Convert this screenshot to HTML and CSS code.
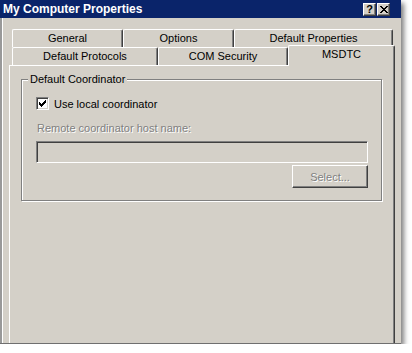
FILE: index.html
```html
<!DOCTYPE html>
<html>
    <head>
        <meta charset="UTF-8">
        <meta name="viewport" content="width=device-width, initial-scale=1.0">
        <link rel="stylesheet" href="styles.css">
    </head>

    <body>

        <div class="window">
            <div class="titlebar">
                <span class="title">My Computer Properties</span>
                <div class="caption-buttons">
                    <span class="cap-btn">?</span>
                    <span class="cap-btn">
                        <svg width="8" height="7" viewBox="0 0 8 7">
                            <rect x="0" y="0" width="2" height="1"/><rect x="6" y="0" width="2" height="1"/>
                            <rect x="1" y="1" width="2" height="1"/><rect x="5" y="1" width="2" height="1"/>
                            <rect x="2" y="2" width="4" height="1"/>
                            <rect x="3" y="3" width="2" height="1"/>
                            <rect x="2" y="4" width="4" height="1"/>
                            <rect x="1" y="5" width="2" height="1"/><rect x="5" y="5" width="2" height="1"/>
                            <rect x="0" y="6" width="2" height="1"/><rect x="6" y="6" width="2" height="1"/>
                        </svg>
                    </span>
                </div>
            </div>

            <div class="body">
                <div class="tabrow">
                    <div class="tab w-general">General</div>
                    <div class="tab w-options">Options</div>
                    <div class="tab w-defprops">Default Properties</div>
                </div>
                <div class="tabrow">
                    <div class="tab w-defprot">Default Protocols</div>
                    <div class="tab w-com">COM Security</div>
                    <div class="tab w-msdtc selected">MSDTC</div>
                </div>

                <div class="panel">
                    <div class="group">
                        <div class="legend">Default Coordinator</div>

                        <div class="check-row">
                            <span class="checkbox">
                                <svg width="7" height="7" viewBox="0 0 7 7">
                                    <rect x="0" y="2" width="1" height="3"/>
                                    <rect x="1" y="3" width="1" height="3"/>
                                    <rect x="2" y="4" width="1" height="3"/>
                                    <rect x="3" y="3" width="1" height="3"/>
                                    <rect x="4" y="2" width="1" height="3"/>
                                    <rect x="5" y="1" width="1" height="3"/>
                                    <rect x="6" y="0" width="1" height="3"/>
                                </svg>
                            </span>
                            <span>Use local coordinator</span>
                        </div>

                        <div class="field-label disabled">Remote coordinator host name:</div>
                        <div class="textbox"></div>
                        <div class="button disabled">Select...</div>
                    </div>
                </div>
            </div>
        </div>

    </body>
</html>
```

FILE: styles.css
```css
body {
    margin: 0;
    background: #fff;
    font-family: "Liberation Sans", Arial, sans-serif;
    font-size: 11px;
    color: #000;
}

.window {
    width: 401px;
    height: 344px;
    box-sizing: border-box;
    overflow: hidden;
    display: flex;
    flex-direction: column;
    background: #d4d0c8;
    border-bottom: 1px solid #6f6f6f;
    box-shadow: 3px 3px 5px rgba(0, 0, 0, 0.5);
}

/* title bar */
.titlebar {
    height: 18px;
    flex: none;
    display: flex;
    align-items: center;
    justify-content: space-between;
    padding: 0 11px 0 3px;
    background: #0a246a;
}
.title {
    color: #fff;
    font-weight: bold;
    font-size: 12px;
}
.caption-buttons {
    display: flex;
    gap: 1px;
}
.cap-btn {
    width: 13px;
    height: 13px;
    box-sizing: border-box;
    display: flex;
    align-items: center;
    justify-content: center;
    background: #d4d0c8;
    border: 1px solid;
    border-color: #fff #404040 #404040 #fff;
    box-shadow: inset -1px -1px #808080;
    font-weight: bold;
    font-size: 11px;
    line-height: 1;
}

/* dialog body */
.body {
    flex: 1;
    display: flex;
    flex-direction: column;
    padding-top: 11px;
    border-left: 2px solid #999;
    box-shadow: inset 1px 0 #fff;
}

.tabrow {
    display: flex;
    height: 18px;
    margin-left: 10px;
}
.tab {
    box-sizing: border-box;
    height: 18px;
    border: 1px solid #fff;
    border-right-color: #404040;
    border-bottom: none;
    border-radius: 2px 2px 0 0;
    box-shadow: inset -1px 0 #808080;
    text-align: center;
    line-height: 16px;
    background: #d4d0c8;
}
.tab.selected {
    height: 21px;
    margin-top: -2px;
    position: relative;
    z-index: 1;
}
.w-general { width: 111px; }
.w-options { width: 111px; }
.w-defprops { width: 159px; }
.w-defprot { width: 146px; }
.w-com { width: 130px; }
.w-msdtc { width: 107px; }

.panel {
    flex: 1;
    width: 386px;
    box-sizing: border-box;
    margin-left: 7px;
    border-left: 1px solid #fff;
    border-top: 1px solid #fff;
    border-right: 1px solid #404040;
    box-shadow: inset -1px 0 #808080;
    padding-top: 13px;
}

/* group box */
.group {
    display: flex;
    flex-direction: column;
    margin: 0 12px 0 11px;
    padding: 0 13px 12px 14px;
    border: 1px solid #808080;
    box-shadow: inset 1px 1px #fff, 1px 1px 0 #fff;
}
.legend {
    align-self: flex-start;
    margin: -7px 0 0 -8px;
    padding: 0 2px;
    line-height: 13px;
    background: #d4d0c8;
}

.check-row {
    display: flex;
    align-items: center;
    gap: 5px;
    height: 13px;
    margin-top: 11px;
}
.checkbox {
    width: 13px;
    height: 13px;
    box-sizing: border-box;
    display: flex;
    align-items: center;
    justify-content: center;
    background: #fff;
    border: 1px solid;
    border-color: #808080 #fff #fff #808080;
    box-shadow: inset 1px 1px #404040, inset -1px -1px #d4d0c8;
}

.disabled {
    color: #808080;
    text-shadow: 1px 1px 0 #fff;
}
.field-label {
    margin: 12px 0 0 1px;
    line-height: 13px;
}
.textbox {
    height: 22px;
    box-sizing: border-box;
    margin-top: 6px;
    background: #d4d0c8;
    border: 1px solid;
    border-color: #808080 #fff #fff #808080;
    box-shadow: inset 1px 1px #404040, inset -1px -1px #d4d0c8;
}
.button {
    align-self: flex-end;
    width: 76px;
    height: 23px;
    box-sizing: border-box;
    margin-top: 2px;
    display: flex;
    align-items: center;
    justify-content: center;
    border: 1px solid;
    border-color: #fff #404040 #404040 #fff;
    box-shadow: inset -1px -1px #808080;
}
```
